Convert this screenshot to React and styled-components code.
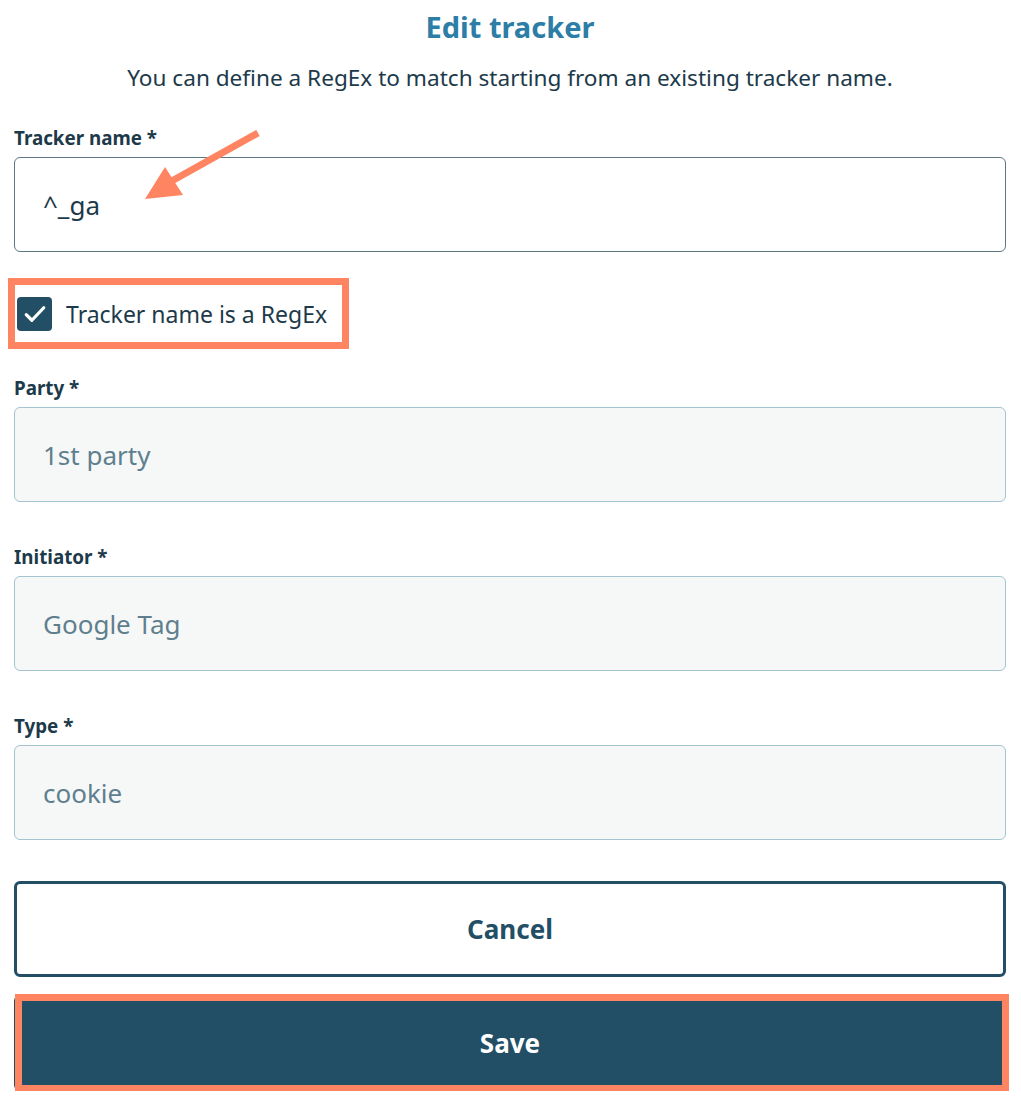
import React from "react";
import styled, { createGlobalStyle } from "styled-components";

const GlobalStyle = createGlobalStyle`
  * { box-sizing: border-box; }
  body {
    margin: 0;
    background: #fff;
    font-family: "Noto Sans", "Open Sans", sans-serif;
    color: #1d3a4a;
  }
`;

const Page = styled.div`
  position: relative;
  padding: 9px 15px 0 14px;
`;

const Title = styled.h1`
  margin: 0;
  text-align: center;
  font-size: 29px;
  line-height: 36px;
  font-weight: 700;
  color: #2d7ea6;
`;

const Subtitle = styled.p`
  margin: 19px 0 36px;
  text-align: center;
  font-size: 22.6px;
  line-height: 28px;
  color: #1d3a4a;
`;

const Field = styled.div`
  margin-bottom: ${(p) => p.$gap ?? 45}px;
`;

const Label = styled.label`
  display: block;
  font-size: 18.8px;
  line-height: 20px;
  font-weight: 700;
  color: #1d3a4a;
  margin-bottom: 9px;
`;

const Input = styled.div`
  height: 95px;
  display: flex;
  align-items: center;
  padding: 0 28px;
  border-radius: 6px;
  font-size: 26px;
  border: 1px solid ${(p) => (p.$disabled ? "#a3c4d1" : "#5f7684")};
  background: ${(p) => (p.$disabled ? "#f6f8f8" : "#fff")};
  color: ${(p) => (p.$disabled ? "#5f7f8e" : "#1d3a4a")};
`;

const CheckRow = styled.div`
  position: relative;
  display: flex;
  align-items: center;
  gap: 14px;
  height: 34px;
  margin: 45px 0 47px;
  padding-left: 3px;
  font-size: 23px;
  color: #1d3a4a;
`;

const Box = styled.span`
  width: 35px;
  height: 34px;
  border-radius: 4px;
  background: #234f66;
  display: flex;
  align-items: center;
  justify-content: center;
`;

const Frame = styled.div`
  position: absolute;
  left: ${(p) => p.$l}px;
  top: ${(p) => p.$t}px;
  width: ${(p) => p.$w}px;
  height: ${(p) => p.$h}px;
  border: 7px solid #ff8562;
  pointer-events: none;
`;

const Actions = styled.div`
  display: flex;
  flex-direction: column;
  gap: 18px;
  margin-top: 41px;
`;

const Button = styled.button`
  position: relative;
  height: 96px;
  width: 100%;
  border-radius: 6px;
  border: 3px solid #234f66;
  background: ${(p) => (p.$primary ? "#234f66" : "#fff")};
  color: ${(p) => (p.$primary ? "#fff" : "#234f66")};
  font-family: "Noto Sans", "Open Sans", sans-serif;
  font-size: 26px;
  font-weight: 700;
`;

const Arrow = styled.svg`
  position: absolute;
  left: 0;
  top: 0;
  pointer-events: none;
`;

export default function App() {
  return (
    <>
      <GlobalStyle />
      <Page>
        <Title>Edit tracker</Title>
        <Subtitle>
          You can define a RegEx to match starting from an existing tracker name.
        </Subtitle>

        <Field $gap={0}>
          <Label>Tracker name *</Label>
          <Input>^_ga</Input>
        </Field>

        <CheckRow>
          <Box>
            <svg width="30" height="30" viewBox="0 0 24 24" fill="none">
              <path
                d="M5 12.5l4.5 4.5L19 7"
                stroke="#fff"
                strokeWidth="2.6"
                strokeLinecap="round"
                strokeLinejoin="round"
              />
            </svg>
          </Box>
          Tracker name is a RegEx
          <Frame $l={-6} $t={-19} $w={341} $h={71} />
        </CheckRow>

        <Field>
          <Label>Party *</Label>
          <Input $disabled>1st party</Input>
        </Field>
        <Field>
          <Label>Initiator *</Label>
          <Input $disabled>Google Tag</Input>
        </Field>
        <Field $gap={0}>
          <Label>Type *</Label>
          <Input $disabled>cookie</Input>
        </Field>

        <Actions>
          <Button>Cancel</Button>
          <Button $primary>
            Save
            <Frame $l={-2} $t={-4} $w={994} $h={98} />
          </Button>
        </Actions>

        <Arrow width="1021" height="260" viewBox="0 0 1021 260">
          <line
            x1="258"
            y1="133"
            x2="170"
            y2="182"
            stroke="#ff8562"
            strokeWidth="7"
          />
          <polygon points="145,199 165,167 183,195" fill="#ff8562" />
        </Arrow>
      </Page>
    </>
  );
}
